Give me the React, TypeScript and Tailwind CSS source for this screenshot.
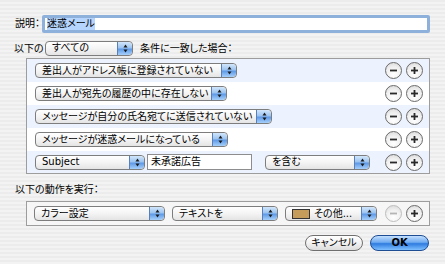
import React from 'react'

const font = "font-['DejaVu_Sans','Noto_Sans_CJK_JP',sans-serif] [font-feature-settings:'palt']"

function Stepper() {
  return (
    <div className="h-full w-[15px] shrink-0 rounded-r-[4px] border-l border-[#5a7fb8] bg-[linear-gradient(180deg,#d2e6fb_0%,#9cc4f1_45%,#5f9ae6_55%,#a7d0fb_100%)] flex items-center justify-center">
      <svg width="5" height="9" viewBox="0 0 5 9">
        <path d="M2.5 0.5 L4.5 3.5 L0.5 3.5 Z" fill="#1a1a1a" />
        <path d="M2.5 8.5 L4.5 5.5 L0.5 5.5 Z" fill="#1a1a1a" />
      </svg>
    </div>
  )
}

function Popup({ w, label, swatch }: { w: string; label: string; swatch?: boolean }) {
  return (
    <div className={`${w} h-[15px] shrink-0 flex items-stretch rounded-[4px] border border-[#7d7d7d] bg-[linear-gradient(180deg,#ffffff_0%,#f4f4f4_50%,#e4e4e4_100%)] overflow-hidden`}>
      <div className="flex-1 flex items-center pl-[6px] gap-[4px] leading-none whitespace-nowrap overflow-hidden">
        {swatch && <span className="w-[18px] h-[10px] border border-[#333] bg-[#c69c5b] shrink-0" />}
        <span>{label}</span>
      </div>
      <Stepper />
    </div>
  )
}

function Circle({ plus, disabled }: { plus?: boolean; disabled?: boolean }) {
  const c = disabled ? '#b5b5b5' : '#2a2a2a'
  return (
    <div className={`w-[17px] h-[17px] rounded-full border ${disabled ? 'border-[#bdbdbd]' : 'border-[#6a6a6a]'} bg-[radial-gradient(circle_at_50%_75%,#ffffff_0%,#f0f0f0_55%,#d4d4d4_100%)] flex items-center justify-center shrink-0`}>
      <svg width="9" height="9" viewBox="0 0 9 9">
        <rect x="1" y="3.6" width="7" height="1.8" fill={c} />
        {plus && <rect x="3.6" y="1" width="1.8" height="7" fill={c} />}
      </svg>
    </div>
  )
}

function Row({ children, blue, h = 'h-[23px]' }: { children: React.ReactNode; blue?: boolean; h?: string }) {
  return (
    <div className={`${h} flex items-center pl-[8px] pr-[6px] ${blue ? 'bg-[#edf3fe]' : 'bg-white'}`}>
      <div className="flex-1 flex items-center">{children}</div>
      <div className="flex gap-[4px]">
        <Circle />
        <Circle plus />
      </div>
    </div>
  )
}

export default function App() {
  return (
    <div className={`w-[445px] h-[264px] overflow-hidden bg-[repeating-linear-gradient(180deg,#ececec_0px,#ececec_2px,#f3f3f3_2px,#f3f3f3_4px)] text-[10px] text-black ${font}`}>
      <div className="pt-[15px] pl-[15px] flex items-center h-[32px]">
        <span className="w-[27px] whitespace-nowrap">説明：</span>
        <div className="w-[388px] h-[18px] border-[3px] border-[#8eb1dc] rounded-[2px] bg-white flex items-center pl-[2px]">
          <span className="bg-[#b5d5ff] leading-[12px]">迷惑メール</span>
        </div>
      </div>

      <div className="mt-[9px] pl-[14px] flex items-center h-[14px]">
        <span className="w-[31px] whitespace-nowrap">以下の</span>
        <Popup w="w-[88px]" label="すべての" />
        <span className="ml-[7px] whitespace-nowrap">条件に一致した場合：</span>
      </div>

      <div className="mt-[3px] ml-[26px] w-[404px] border border-[#9d9d9d]">
        <Row blue><Popup w="w-[202px]" label="差出人がアドレス帳に登録されていない" /></Row>
        <Row><Popup w="w-[192px]" label="差出人が宛先の履歴の中に存在しない" /></Row>
        <Row blue><Popup w="w-[237px]" label="メッセージが自分の氏名宛てに送信されていない" /></Row>
        <Row><Popup w="w-[193px]" label="メッセージが迷惑メールになっている" /></Row>
        <Row blue h="h-[22px]">
          <Popup w="w-[110px]" label="Subject" />
          <div className="ml-[2px] w-[105px] h-[16px] border border-[#8d8d8d] bg-white flex items-center pl-[3px] leading-none">未承諾広告</div>
          <div className="ml-[13px]"><Popup w="w-[105px]" label="を含む" /></div>
        </Row>
      </div>

      <div className="mt-[8px] pl-[15px] h-[14px] flex items-center whitespace-nowrap">以下の動作を実行：</div>

      <div className="mt-[5px] ml-[26px] w-[404px] h-[25px] border border-[#9d9d9d] bg-[#f6f6f6] flex items-center pl-[7px] pr-[6px]">
        <div className="flex-1 flex items-center">
          <Popup w="w-[131px]" label="カラー設定" />
          <div className="ml-[7px]"><Popup w="w-[106px]" label="テキストを" /></div>
          <div className="ml-[7px]"><Popup w="w-[92px]" label="その他..." swatch /></div>
        </div>
        <div className="flex gap-[4px]">
          <Circle disabled />
          <Circle plus />
        </div>
      </div>

      <div className="mt-[9px] pr-[16px] flex justify-end gap-[7px]">
        <div className="w-[58px] h-[16px] rounded-full border border-[#6f6f6f] bg-[linear-gradient(180deg,#ffffff_0%,#f2f2f2_50%,#dcdcdc_100%)] flex items-center justify-center leading-none">キャンセル</div>
        <div className="w-[59px] h-[16px] rounded-full border border-[#1f4d94] bg-[linear-gradient(180deg,#c4e0ff_0%,#6eaaf0_45%,#2f7ce0_55%,#7fc0ff_100%)] flex items-center justify-center leading-none font-bold">OK</div>
      </div>
    </div>
  )
}
